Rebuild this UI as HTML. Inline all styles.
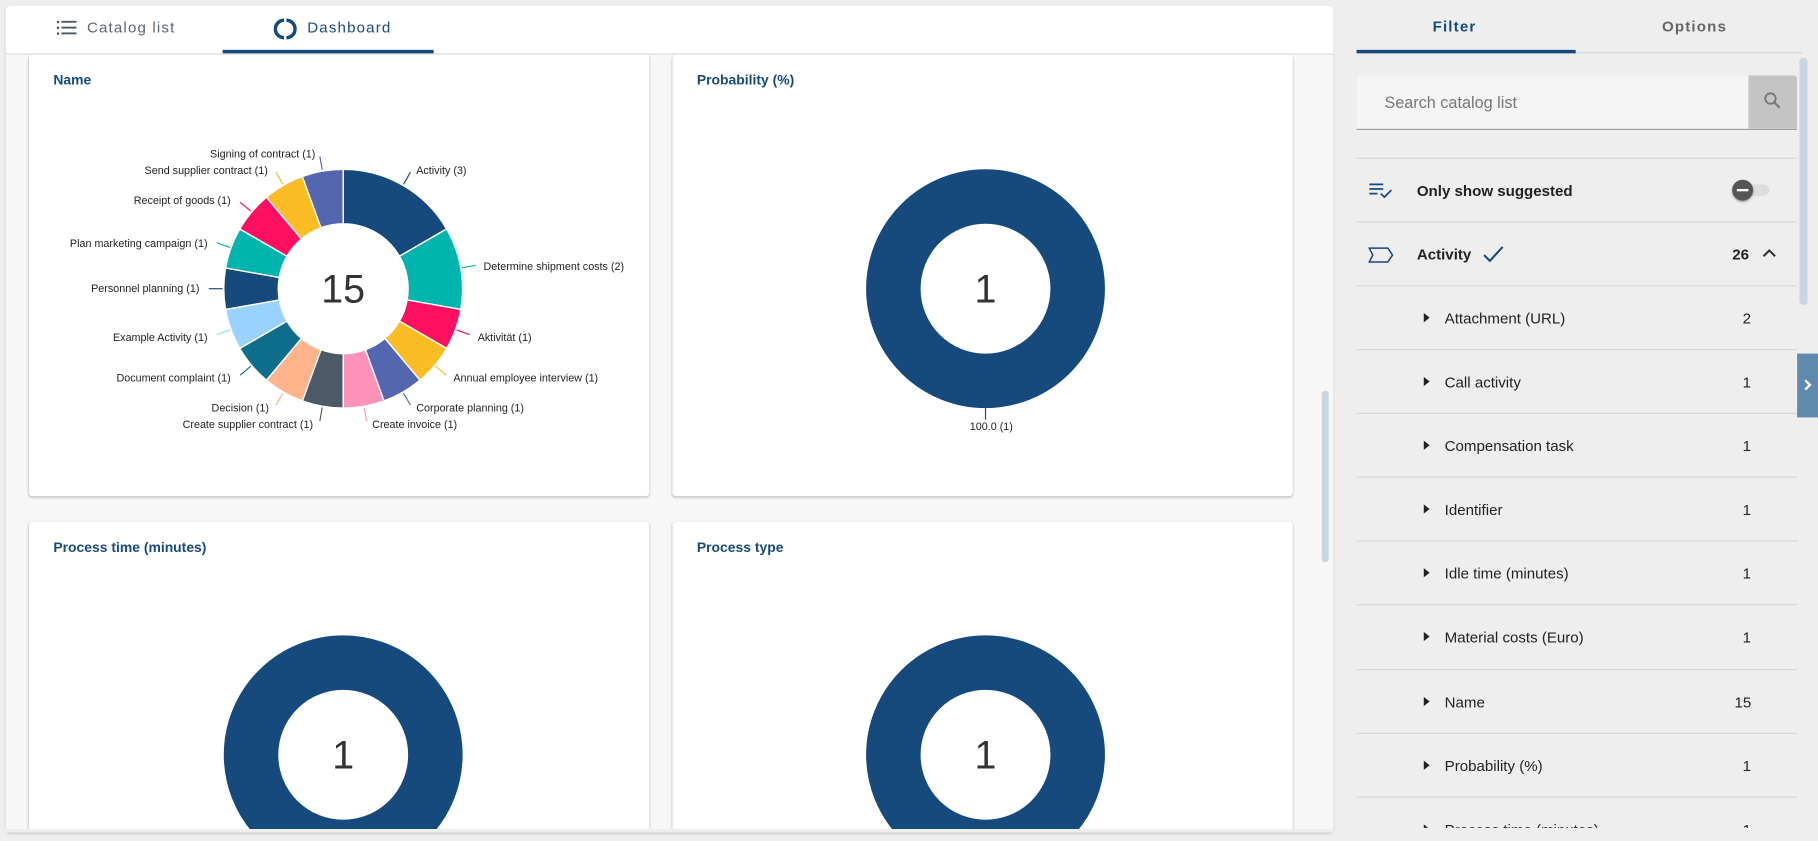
<!DOCTYPE html>
<html><head><meta charset="utf-8"><style>
html,body{margin:0;padding:0;width:1818px;height:841px;overflow:hidden;background:#eeeeee;font-family:"Liberation Sans",sans-serif;}
#w{position:absolute;left:0;top:0;width:1568px;height:725px;transform:scale(1.159439);transform-origin:0 0;}
.main{position:absolute;left:5px;top:5px;width:1145px;height:713px;background:#f7f7f7;border-radius:4px;overflow:hidden;box-shadow:0 1px 2px rgba(0,0,0,.15);}
.tabs{position:absolute;left:0;top:0;width:1145px;height:41px;background:#fff;border-bottom:1px solid #ddd;}
.tab{position:absolute;top:11px;font-size:13px;letter-spacing:1px;color:#5a6570;}
.card{position:absolute;background:#fff;border-radius:3px;box-shadow:0 1px 2px rgba(0,0,0,.25);}
.ct{position:absolute;left:21px;top:15px;font-size:12px;color:#174a7c;font-weight:bold;}
.rp{position:absolute;left:1150px;top:0;width:418px;height:725px;}
.row{position:absolute;left:20px;width:380px;height:55px;border-top:1px solid #d6d6d6;font-size:13px;color:#222;}
.row span{position:absolute;top:20px;}
.tri{position:absolute;left:58px;top:23px;width:0;height:0;border-left:5px solid #222;border-top:4px solid transparent;border-bottom:4px solid transparent;}
</style></head><body><div id="w">
<div class="main">
 <div class="tabs">
  <svg style="position:absolute;left:44px;top:12px" width="17" height="14" viewBox="0 0 17 14"><g fill="#4a5560"><rect x="0" y="1" width="2" height="2"/><rect x="0" y="6" width="2" height="2"/><rect x="0" y="11" width="2" height="2"/><rect x="4" y="1" width="13" height="1.6"/><rect x="4" y="6" width="13" height="1.6"/><rect x="4" y="11" width="13" height="1.6"/></g></svg>
  <div class="tab" style="left:70px">Catalog list</div>
  <svg style="position:absolute;left:231px;top:10px" width="20" height="20" viewBox="0 0 20 20"><path d="M9 2.5A7.5 7.5 0 0 0 9 17.5" fill="none" stroke="#174a7c" stroke-width="3"/><path d="M11 2.5A7.5 7.5 0 0 1 11 17.5" fill="none" stroke="#174a7c" stroke-width="3"/></svg>
  <div class="tab" style="left:260px;color:#174a7c">Dashboard</div>
  <div style="position:absolute;left:187px;top:38px;width:182px;height:3px;background:#174a7c"></div>
 </div>
 <div class="card" style="left:20px;top:42px;width:535px;height:381px"><div class="ct">Name</div></div>
 <div class="card" style="left:575px;top:42px;width:535px;height:381px"><div class="ct">Probability (%)</div></div>
 <div class="card" style="left:20px;top:445px;width:535px;height:280px"><div class="ct">Process time (minutes)</div></div>
 <div class="card" style="left:575px;top:445px;width:535px;height:280px"><div class="ct">Process type</div></div>
 <div style="position:absolute;left:1135px;top:332px;width:6px;height:148px;background:#c8d6e2;border-radius:3px"></div>
</div>
<svg id="ch" style="position:absolute;left:0;top:0" width="1150" height="718" viewBox="0 0 1150 718" font-family="Liberation Sans, sans-serif" font-size="9.3" fill="#222"></svg>
<div class="rp">
 <div style="position:absolute;left:0;top:15px;width:209px;text-align:center;font-size:13px;font-weight:bold;letter-spacing:1px;color:#174a7c">Filter</div>
 <div style="position:absolute;left:209px;top:15px;width:205px;text-align:center;font-size:13px;font-weight:bold;letter-spacing:1px;color:#666">Options</div>
 <div style="position:absolute;left:20px;top:45px;width:385px;height:1px;background:#d6d6d6"></div>
 <div style="position:absolute;left:20px;top:43px;width:189px;height:3px;background:#174a7c"></div>
 <div style="position:absolute;left:20px;top:65px;width:380px;height:46px;background:#f5f5f5;border-bottom:1px solid #888;border-radius:3px 3px 0 0;overflow:hidden">
  <span style="position:absolute;left:24px;top:15px;font-size:14px;color:#777">Search catalog list</span>
  <div style="position:absolute;right:0;top:0;width:42px;height:46px;background:#c4c4c4">
   <svg style="position:absolute;left:13px;top:14px" width="16" height="16" viewBox="0 0 16 16"><circle cx="6" cy="6" r="4.5" fill="none" stroke="#777" stroke-width="1.6"/><path d="M9.3 9.3L14 14" stroke="#777" stroke-width="1.8"/></svg>
  </div>
 </div>
 <div style="position:absolute;left:402px;top:50px;width:7px;height:213px;background:#c8d6e2;border-radius:3px"></div>
 <div class="row" style="top:136px">
  <svg style="position:absolute;left:10px;top:20px" width="22" height="14" viewBox="0 0 22 14"><g stroke="#174a7c" stroke-width="1.5" fill="none"><path d="M1 2H13M1 6H13M1 10H8"/><path d="M11 10l3 3 6-6"/></g></svg>
  <span style="left:52px;font-weight:bold">Only show suggested</span>
  <div style="position:absolute;left:332px;top:22px;width:24px;height:10px;background:#ddd;border-radius:5px"></div>
  <div style="position:absolute;left:324px;top:18px;width:18px;height:18px;background:#555;border-radius:50%;box-shadow:0 1px 2px rgba(0,0,0,.4)"><div style="position:absolute;left:4px;top:8px;width:10px;height:2px;background:#fff"></div></div>
 </div>
 <div class="row" style="top:191px">
  <svg style="position:absolute;left:10px;top:21px" width="22" height="14" viewBox="0 0 22 14"><path d="M1 1H17L21 7L17 13H1L4 7Z" fill="none" stroke="#174a7c" stroke-width="1.3"/></svg>
  <span style="left:52px;font-weight:bold">Activity</span>
  <svg style="position:absolute;left:109px;top:20px" width="18" height="14" viewBox="0 0 18 14"><path d="M1 8l5 5L17 1" fill="none" stroke="#174a7c" stroke-width="1.8"/></svg>
  <span style="left:324px;font-weight:bold">26</span>
  <svg style="position:absolute;left:350px;top:22px" width="12" height="10" viewBox="0 0 12 10"><path d="M1 7l5-5 5 5" fill="none" stroke="#333" stroke-width="1.8"/></svg>
 </div>
 <div style="position:absolute;left:0;top:246px;width:418px;height:468px;overflow:hidden">
  <div class="row" style="top:0"><div class="tri"></div><span style="left:76px">Attachment (URL)</span><span style="left:333px">2</span></div>
  <div class="row" style="top:55px"><div class="tri"></div><span style="left:76px">Call activity</span><span style="left:333px">1</span></div>
  <div class="row" style="top:110px"><div class="tri"></div><span style="left:76px">Compensation task</span><span style="left:333px">1</span></div>
  <div class="row" style="top:165px"><div class="tri"></div><span style="left:76px">Identifier</span><span style="left:333px">1</span></div>
  <div class="row" style="top:220px"><div class="tri"></div><span style="left:76px">Idle time (minutes)</span><span style="left:333px">1</span></div>
  <div class="row" style="top:275px"><div class="tri"></div><span style="left:76px">Material costs (Euro)</span><span style="left:333px">1</span></div>
  <div class="row" style="top:331px"><div class="tri"></div><span style="left:76px">Name</span><span style="left:326px">15</span></div>
  <div class="row" style="top:386px"><div class="tri"></div><span style="left:76px">Probability (%)</span><span style="left:333px">1</span></div>
  <div class="row" style="top:441px"><div class="tri"></div><span style="left:76px">Process time (minutes)</span><span style="left:333px">1</span></div>
 </div>
 <div style="position:absolute;left:400px;top:305px;width:18px;height:55px;background:#5f8aad">
  <svg style="position:absolute;left:4px;top:21px" width="10" height="12" viewBox="0 0 10 12"><path d="M3 2l4 4-4 4" fill="none" stroke="#fff" stroke-width="2"/></svg>
 </div>
</div>
</div>
<script>
var ns="http://www.w3.org/2000/svg",svg=document.getElementById('ch');
function el(t,a,txt){var e=document.createElementNS(ns,t);for(var k in a)e.setAttribute(k,a[k]);if(txt)e.textContent=txt;svg.appendChild(e);return e;}
function pt(cx,cy,r,a){var t=(a-90)*Math.PI/180;return [cx+r*Math.cos(t),cy+r*Math.sin(t)];}
function seg(cx,cy,ro,ri,a0,a1,c){var l=(a1-a0)>180?1:0;var p1=pt(cx,cy,ro,a0),p2=pt(cx,cy,ro,a1),p3=pt(cx,cy,ri,a1),p4=pt(cx,cy,ri,a0);
el('path',{d:'M'+p1+'A'+ro+' '+ro+' 0 '+l+' 1 '+p2+'L'+p3+'A'+ri+' '+ri+' 0 '+l+' 0 '+p4+'Z',fill:c,stroke:'#fff','stroke-width':1.2});}
var data=[[3,'#174a7c','Activity (3)'],[2,'#00b5ad','Determine shipment costs (2)'],[1,'#ff0f5f','Aktivität (1)'],[1,'#fbbc24','Annual employee interview (1)'],[1,'#5566b0','Corporate planning (1)'],[1,'#ff92b8','Create invoice (1)'],[1,'#4b5a66','Create supplier contract (1)'],[1,'#ffb48c','Decision (1)'],[1,'#0f6e8c','Document complaint (1)'],[1,'#99d2ff','Example Activity (1)'],[1,'#174a7c','Personnel planning (1)'],[1,'#00b5ad','Plan marketing campaign (1)'],[1,'#ff0f5f','Receipt of goods (1)'],[1,'#fbbc24','Send supplier contract (1)'],[1,'#5566b0','Signing of contract (1)']];
var lab=[[359,150,0],[417,233,0],[412,294,0],[391,329,0],[359,355,0],[321,369,0],[270,369,1],[232,355,1],[199,329,1],[179,294,1],[172,252,1],[179,213,1],[199,176,1],[231,150,1],[272,136,1]];
var cx=296,cy=249,a=0;
data.forEach(function(d,i){var a1=a+d[0]*20;seg(cx,cy,103,56,a,a1,d[1]);var m=(a+a1)/2;var p=pt(cx,cy,104,m),q=pt(cx,cy,116,m);
el('line',{x1:p[0],y1:p[1],x2:q[0],y2:q[1],stroke:d[1],'stroke-width':1});
var L=lab[i];el('text',{x:L[0],y:L[1],'text-anchor':L[2]?'end':'start'},d[2]);a=a1;});
el('text',{x:cx,y:cy+12,'text-anchor':'middle','font-size':34,fill:'#333'},'15');
[[850,249],[296,651],[850,651]].forEach(function(c){
el('circle',{cx:c[0],cy:c[1],r:79.5,fill:'none',stroke:'#174a7c','stroke-width':47});
el('text',{x:c[0],y:c[1]+12,'text-anchor':'middle','font-size':34,fill:'#333'},'1');});
el('line',{x1:850,y1:352,x2:850,y2:362,stroke:'#174a7c','stroke-width':1});
el('text',{x:855,y:371,'text-anchor':'middle'},'100.0 (1)');
el('rect',{x:0,y:715,width:1150,height:10,fill:'#eeeeee'});
</script>
</body></html>
